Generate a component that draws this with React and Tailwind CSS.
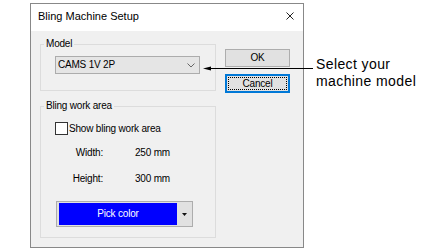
import React from 'react';

const GroupBox = ({ title, className = '', children }) => (
  <fieldset className={`border border-[#dcdcdc] m-0 min-w-0 ${className}`}>
    <legend className="ml-[-11px] px-[2px] text-[10px] leading-[12px]">{title}</legend>
    {children}
  </fieldset>
);

const App = () => {
  return (
    <div className="relative flex w-[422px] h-[250px] bg-white text-black font-['Liberation_Sans',Arial,sans-serif]">
      {/* Dialog */}
      <div className="ml-[30px] mt-[3px] w-[274px] h-[245px] border border-[#888888] flex flex-col">
        {/* Title bar */}
        <div className="h-[27px] bg-white flex items-start justify-between pl-[7px] pr-[9px] pt-[6px]">
          <span className="text-[11px] leading-[13px]">Bling Machine Setup</span>
          <svg width="8" height="8" viewBox="0 0 8 8" className="mt-[2px]">
            <path d="M0.5 0.5 L7.5 7.5 M7.5 0.5 L0.5 7.5" stroke="#222" strokeWidth="1" fill="none" />
          </svg>
        </div>

        {/* Body */}
        <div className="flex-1 bg-[#f0f0f0] flex pl-[9px] text-[10px] leading-[12px] tracking-[-0.2px]">
          <div className="w-[176px] pt-[7px] flex flex-col">
            <GroupBox title="Model" className="pl-[14px] pt-[6px] pb-[16px]">
              <div className="w-[145px] h-[18px] border border-[#acacac] bg-[#e5e5e5] flex items-center justify-between pl-[2px] pr-[4px]">
                <span>CAMS 1V 2P</span>
                <svg width="8" height="5" viewBox="0 0 8 5">
                  <path d="M0.5 0.5 L4 4 L7.5 0.5" stroke="#666" strokeWidth="1" fill="none" />
                </svg>
              </div>
            </GroupBox>

            <GroupBox title="Bling work area" className="mt-[9px] pl-[14px] pt-[10px] pb-[10px]">
              <div className="flex items-center h-[13px]">
                <span className="w-[13px] h-[13px] border border-[#333333] bg-white" />
                <span className="ml-[1px]">Show bling work area</span>
              </div>
              <div className="mt-[11px] flex h-[14px] items-center">
                <span className="w-[48px] text-right">Width:</span>
                <span className="ml-[32px]">250 mm</span>
              </div>
              <div className="mt-[12px] flex h-[14px] items-center">
                <span className="w-[48px] text-right">Height:</span>
                <span className="ml-[32px]">300 mm</span>
              </div>
              <div className="mt-[15px] ml-[1px] w-[137px] h-[26px] border border-[#adadad] bg-[#e1e1e1] flex">
                <div className="ml-[2px] mt-[1px] w-[118px] h-[22px] bg-[#0000ff] text-white flex items-center justify-center">
                  Pick color
                </div>
                <div className="flex-1 flex items-center justify-center">
                  <svg width="5" height="3" viewBox="0 0 5 3">
                    <path d="M0 0 L5 0 L2.5 3 Z" fill="#111" />
                  </svg>
                </div>
              </div>
            </GroupBox>
          </div>

          {/* Buttons */}
          <div className="ml-[9px] pt-[18px] flex flex-col">
            <button className="w-[65px] h-[18px] border border-[#adadad] bg-[#e1e1e1] text-[10px] leading-[12px] flex items-center justify-center">
              OK
            </button>
            <button className="mt-[7px] w-[65px] h-[19px] border-2 border-[#0078d7] bg-[#e1e1e1] p-[1px] flex">
              <span className="flex-1 border border-dotted border-black flex items-center justify-center text-[10px] leading-[12px]">
                Cancel
              </span>
            </button>
          </div>
        </div>
      </div>

      {/* Callout */}
      <div className="ml-[12px] mt-[56px] text-[14px] leading-[17px] tracking-[0.4px]">
        <div>Select your</div>
        <div>machine model</div>
      </div>

      <svg className="absolute left-[200px] top-[63px]" width="116" height="12" viewBox="0 0 116 12">
        <path d="M8 5.5 L113 5.5" stroke="#000" strokeWidth="1" />
        <polygon points="3,5.5 11,3.5 11,7.5" fill="#000" />
      </svg>
    </div>
  );
};

export default App;
